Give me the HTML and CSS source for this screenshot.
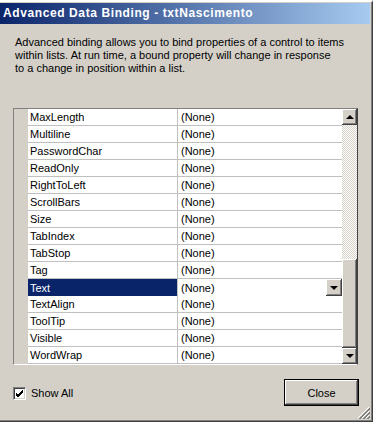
FILE: index.html
```html
<!DOCTYPE html>
<html lang="en">
<head>
    <meta charset="UTF-8">
    <title>Advanced Data Binding</title>
    <link rel="stylesheet" href="styles.css">
</head>
<body>
    <div class="window">
        <div class="titlebar">Advanced Data Binding - txtNascimento</div>
        <div class="content">
            <p class="desc">Advanced binding allows you to bind properties of a control to items<br>within lists. At run time, a bound property will change in response<br>to a change in position within a list.</p>

            <div class="grid">
                <div class="rows">
                    <div class="row"><span class="head"></span><span class="name">MaxLength</span><span class="value">(None)</span></div>
                    <div class="row"><span class="head"></span><span class="name">Multiline</span><span class="value">(None)</span></div>
                    <div class="row"><span class="head"></span><span class="name">PasswordChar</span><span class="value">(None)</span></div>
                    <div class="row"><span class="head"></span><span class="name">ReadOnly</span><span class="value">(None)</span></div>
                    <div class="row"><span class="head"></span><span class="name">RightToLeft</span><span class="value">(None)</span></div>
                    <div class="row"><span class="head"></span><span class="name">ScrollBars</span><span class="value">(None)</span></div>
                    <div class="row"><span class="head"></span><span class="name">Size</span><span class="value">(None)</span></div>
                    <div class="row"><span class="head"></span><span class="name">TabIndex</span><span class="value">(None)</span></div>
                    <div class="row"><span class="head"></span><span class="name">TabStop</span><span class="value">(None)</span></div>
                    <div class="row"><span class="head"></span><span class="name">Tag</span><span class="value">(None)</span></div>
                    <div class="row selected"><span class="head"></span><span class="name">Text</span><span class="value">(None)<span class="drop-btn"><i class="arrow-down"></i></span></span></div>
                    <div class="row"><span class="head"></span><span class="name">TextAlign</span><span class="value">(None)</span></div>
                    <div class="row"><span class="head"></span><span class="name">ToolTip</span><span class="value">(None)</span></div>
                    <div class="row"><span class="head"></span><span class="name">Visible</span><span class="value">(None)</span></div>
                    <div class="row"><span class="head"></span><span class="name">WordWrap</span><span class="value">(None)</span></div>
                </div>
                <div class="scrollbar">
                    <div class="sb-btn"><i class="arrow-up"></i></div>
                    <div class="sb-track"></div>
                    <div class="sb-thumb"></div>
                    <div class="sb-btn"><i class="arrow-down"></i></div>
                </div>
            </div>

            <div class="footer">
                <label class="check">
                    <span class="check-box">
                        <svg width="9" height="9" viewBox="0 0 9 9"><path d="M1 4 L3 6 L8 1 M1 5 L3 7 L8 2 M1 6 L3 8 L8 3" stroke="#000" stroke-width="1" fill="none" shape-rendering="crispEdges"/></svg>
                    </span>
                    Show All
                </label>
                <button class="btn default">Close</button>
            </div>
        </div>
        <svg class="grip" width="12" height="12" viewBox="0 0 12 12" shape-rendering="crispEdges">
            <path d="M11 0 L0 11 M11 4 L4 11 M11 8 L8 11" stroke="#fff" stroke-width="1"/>
            <path d="M12 1 L1 12 M12 2 L2 12 M12 5 L5 12 M12 6 L6 12 M12 9 L9 12 M12 10 L10 12" stroke="#808080" stroke-width="1"/>
        </svg>
    </div>
</body>
</html>
```

FILE: styles.css
```css
:root {
    --face: #d4d0c8;
    --shadow: #808080;
    --dark: #404040;
    --navy: #0a246a;
}

body {
    margin: 0;
    background: #fff;
    font-family: 'Liberation Sans', Arial, sans-serif;
    font-size: 11px;
    color: #000;
}

.window {
    position: relative;
    width: 373px;
    height: 422px;
    box-sizing: border-box;
    background: var(--face);
    border-top: 2px solid #fff;
    border-right: 1px solid var(--dark);
    border-bottom: 1px solid var(--dark);
    box-shadow: inset -1px -1px var(--shadow);
    padding-top: 1px;
}

.titlebar {
    height: 21px;
    line-height: 21px;
    padding-left: 3px;
    margin-right: 2px;
    background: linear-gradient(to right, var(--navy), #a6caf0);
    color: #fff;
    font-weight: bold;
    font-size: 12px;
    letter-spacing: 0.6px;
}

.content {
    padding: 0 13px;
}

.desc {
    margin: 12px 0 33px 2px;
    line-height: 13px;
    white-space: nowrap;
}

.grid {
    display: flex;
    width: 345px;
    box-sizing: border-box;
    border: 1px solid;
    border-color: var(--shadow) var(--dark) #fff var(--shadow);
}

.rows {
    flex: 1;
}

.row {
    display: grid;
    grid-template-columns: 14px 150px 1fr;
    height: 17px;
}

.row span {
    display: flex;
    align-items: center;
}

.head {
    background: var(--face);
}

.name {
    background: #fff;
    padding-left: 2px;
    border-right: 1px solid #c0c0c0;
    border-bottom: 1px solid #c0c0c0;
}

.value {
    background: #fff;
    padding-left: 3px;
    border-bottom: 1px solid #c0c0c0;
}

.row.selected .name {
    background: var(--navy);
    color: #fff;
}

.drop-btn {
    margin-left: auto;
    width: 16px;
    height: 17px;
    justify-content: center;
    background: var(--face);
    box-shadow: inset -1px -1px var(--dark), inset 1px 1px #fff, inset -2px -2px var(--shadow);
}

.scrollbar {
    width: 15px;
    display: flex;
    flex-direction: column;
}

.sb-btn,
.sb-thumb {
    background: var(--face);
    box-shadow: inset -1px -1px var(--dark), inset 1px 1px #fff, inset -2px -2px var(--shadow);
}

.sb-btn {
    height: 16px;
    display: flex;
    align-items: center;
    justify-content: center;
}

.sb-track {
    flex: 1;
    background: repeating-conic-gradient(var(--face) 0 25%, #fff 0 50%) 0 0 / 2px 2px;
}

.sb-thumb {
    height: 89px;
}

.arrow-up,
.arrow-down {
    width: 0;
    height: 0;
    border-left: 4px solid transparent;
    border-right: 4px solid transparent;
}

.arrow-up {
    border-bottom: 4px solid #000;
}

.arrow-down {
    border-top: 4px solid #000;
}

.footer {
    display: flex;
    justify-content: space-between;
    align-items: center;
    margin-top: 14px;
    width: 346px;
}

.check {
    display: flex;
    align-items: center;
    gap: 5px;
    margin-top: 1px;
}

.check-box {
    width: 13px;
    height: 13px;
    box-sizing: border-box;
    background: #fff;
    border: 1px solid;
    border-color: var(--shadow) #fff #fff var(--shadow);
    box-shadow: inset 1px 1px var(--dark), inset -1px -1px var(--face);
    display: flex;
    align-items: center;
    justify-content: center;
}

.btn {
    width: 75px;
    height: 27px;
    font-family: inherit;
    font-size: 11px;
    color: #000;
    background: var(--face);
    border: 1px solid #000;
    box-shadow: inset -1px -1px var(--dark), inset 1px 1px #fff, inset -2px -2px var(--shadow);
    padding: 0;
}

.grip {
    position: absolute;
    right: 2px;
    bottom: 2px;
}
```
